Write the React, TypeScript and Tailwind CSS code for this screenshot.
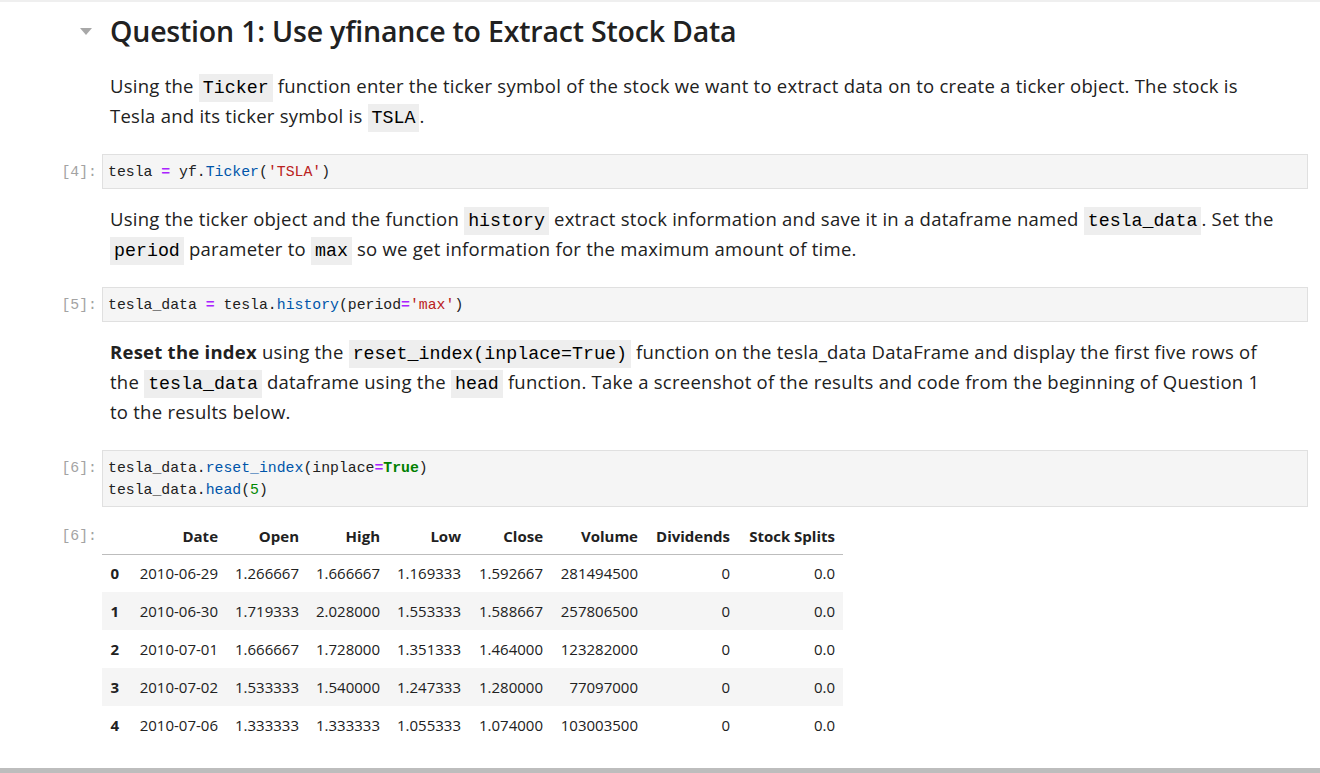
import React from "react";

const sans = "font-['Open_Sans','Noto_Sans',sans-serif]";
const mono = "font-['Liberation_Mono','DejaVu_Sans_Mono',monospace]";

// syntax colours of the notebook code cells
const Op = ({ children }: { children: React.ReactNode }) => (
  <span className="text-[#aa22ff] font-bold">{children}</span>
);
const Prop = ({ children }: { children: React.ReactNode }) => (
  <span className="text-[#0055aa]">{children}</span>
);
const Str = ({ children }: { children: React.ReactNode }) => (
  <span className="text-[#ba2121]">{children}</span>
);
const Num = ({ children }: { children: React.ReactNode }) => (
  <span className="text-[#008800]">{children}</span>
);
const Kw = ({ children }: { children: React.ReactNode }) => (
  <span className="text-[#008000] font-bold">{children}</span>
);

const Code = ({ children }: { children: React.ReactNode }) => (
  <code className={`${mono} text-[18.3px] leading-none tracking-normal bg-[#eeeeee] text-black px-[4px] py-[4px]`}>
    {children}
  </code>
);

function Prompt({ label, className = "" }: { label?: string; className?: string }) {
  return (
    <div className={`${mono} w-[102px] shrink-0 pr-[5px] text-right text-[14.8px] leading-[22px] text-[#a3a3a3] ${className}`}>
      {label}
    </div>
  );
}

function CodeCell({ n, lines, className = "" }: { n: number; lines: React.ReactNode[]; className?: string }) {
  return (
    <div className={`flex items-start ${className}`}>
      <Prompt label={`[${n}]:`} className="pt-[7px]" />
      <div className="flex-1 mr-[12px] bg-[#f5f5f5] border border-[#e0e0e0] px-[5px] pt-[6px] pb-[5px]">
        {lines.map((l, i) => (
          <div key={i} className={`${mono} text-[14.8px] leading-[22px] text-[#212121] whitespace-pre`}>
            {l}
          </div>
        ))}
      </div>
    </div>
  );
}

function Markdown({ children, className = "" }: { children: React.ReactNode; className?: string }) {
  return (
    <div className={`flex ${className}`}>
      <Prompt />
      <p className={`${sans} flex-1 pl-[8px] text-[18.5px] leading-[30px] tracking-[0.25px] text-[#212121] whitespace-nowrap`}>
        {children}
      </p>
    </div>
  );
}

const columns = [
  { name: "", w: "w-[25px]" },
  { name: "Date", w: "w-[99px]" },
  { name: "Open", w: "w-[81px]" },
  { name: "High", w: "w-[81px]" },
  { name: "Low", w: "w-[81px]" },
  { name: "Close", w: "w-[82px]" },
  { name: "Volume", w: "w-[95px]" },
  { name: "Dividends", w: "w-[92px]" },
  { name: "Stock Splits", w: "w-[105px]" },
];

const rows = [
  ["0", "2010-06-29", "1.266667", "1.666667", "1.169333", "1.592667", "281494500", "0", "0.0"],
  ["1", "2010-06-30", "1.719333", "2.028000", "1.553333", "1.588667", "257806500", "0", "0.0"],
  ["2", "2010-07-01", "1.666667", "1.728000", "1.351333", "1.464000", "123282000", "0", "0.0"],
  ["3", "2010-07-02", "1.533333", "1.540000", "1.247333", "1.280000", "77097000", "0", "0.0"],
  ["4", "2010-07-06", "1.333333", "1.333333", "1.055333", "1.074000", "103003500", "0", "0.0"],
];

export default function App() {
  return (
    <div className="w-[1320px] h-[773px] overflow-hidden bg-white flex flex-col">
      <div className="h-[2px] bg-[#efefef]" />

      {/* Heading */}
      <div className="flex items-center mt-[11px]">
        <div className="w-[102px] shrink-0 flex justify-end pr-[10px]">
          <svg width="12" height="7" viewBox="0 0 12 7">
            <path d="M0 0 L12 0 L6 7 Z" fill="#a8a8a8" />
          </svg>
        </div>
        <h1 className={`${sans} pl-[8px] text-[28.5px] leading-[36px] tracking-[-0.2px] font-semibold text-[#212121]`}>
          Question 1: Use yfinance to Extract Stock Data
        </h1>
      </div>

      <Markdown className="mt-[22px]">
        Using the <Code>Ticker</Code> function enter the ticker symbol of the stock we want to extract data on to create a ticker object. The stock is
        <br />
        Tesla and its ticker symbol is <Code>TSLA</Code>.
      </Markdown>

      <CodeCell
        n={4}
        className="mt-[23px]"
        lines={[
          <>tesla <Op>=</Op> yf.<Prop>Ticker</Prop>(<Str>'TSLA'</Str>)</>,
        ]}
      />

      <Markdown className="mt-[15px]">
        Using the ticker object and the function <Code>history</Code> extract stock information and save it in a dataframe named <Code>tesla_data</Code>. Set the
        <br />
        <Code>period</Code> parameter to <Code>max</Code> so we get information for the maximum amount of time.
      </Markdown>

      <CodeCell
        n={5}
        className="mt-[23px]"
        lines={[
          <>tesla_data <Op>=</Op> tesla.<Prop>history</Prop>(period<Op>=</Op><Str>'max'</Str>)</>,
        ]}
      />

      <Markdown className="mt-[15px]">
        <b className="font-bold">Reset the index</b> using the <Code>reset_index(inplace=True)</Code> function on the tesla_data DataFrame and display the first five rows of
        <br />
        the <Code>tesla_data</Code> dataframe using the <Code>head</Code> function. Take a screenshot of the results and code from the beginning of Question 1
        <br />
        to the results below.
      </Markdown>

      <CodeCell
        n={6}
        className="mt-[23px]"
        lines={[
          <>tesla_data.<Prop>reset_index</Prop>(inplace<Op>=</Op><Kw>True</Kw>)</>,
          <>tesla_data.<Prop>head</Prop>(<Num>5</Num>)</>,
        ]}
      />

      {/* Output */}
      <div className="flex items-start mt-[11px]">
        <div className="h-[36px] flex items-center">
          <Prompt label="[6]:" />
        </div>
        <table className={`${sans} table-fixed border-collapse text-[15px] text-[#212121]`}>
          <thead>
            <tr className="h-[36px] border-b border-[#bdbdbd]">
              {columns.map((c) => (
                <th key={c.name} className={`${c.w} px-[8px] text-right font-bold whitespace-nowrap`}>
                  {c.name}
                </th>
              ))}
            </tr>
          </thead>
          <tbody>
            {rows.map((r, i) => (
              <tr key={i} className={`h-[38px] ${i % 2 === 1 ? "bg-[#f5f5f5]" : "bg-white"}`}>
                {r.map((v, j) => (
                  <td
                    key={j}
                    className={`px-[8px] text-right whitespace-nowrap ${j === 0 ? "font-bold" : ""}`}
                  >
                    {v}
                  </td>
                ))}
              </tr>
            ))}
          </tbody>
        </table>
      </div>

      <div className="flex-1" />
      <div className="h-[5px] bg-[#bdbdbd]" />
    </div>
  );
}
